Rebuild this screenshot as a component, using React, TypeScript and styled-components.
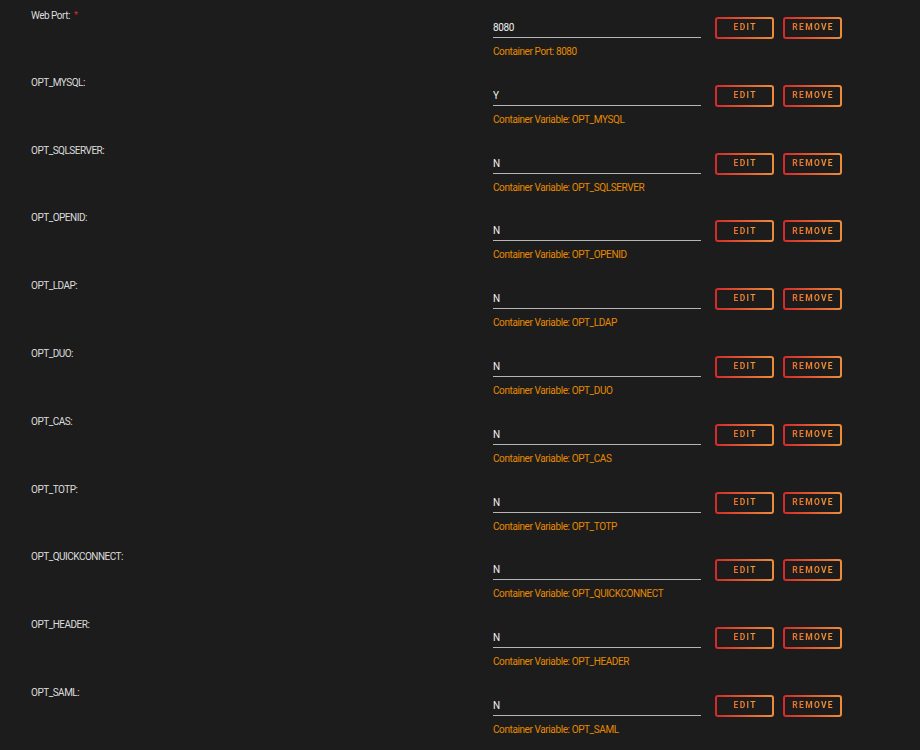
import React from "react";
import styled, { createGlobalStyle } from "styled-components";

type Setting = {
  label: string;
  value: string;
  hint: string;
  required?: boolean;
};

const settings: Setting[] = [
  { label: "Web Port:", value: "8080", hint: "Container Port: 8080", required: true },
  ...["MYSQL", "SQLSERVER", "OPENID", "LDAP", "DUO", "CAS", "TOTP", "QUICKCONNECT", "HEADER", "SAML"].map(
    (name) => ({
      label: `OPT_${name}:`,
      value: name === "MYSQL" ? "Y" : "N",
      hint: `Container Variable: OPT_${name}`,
    })
  ),
];

const GlobalStyle = createGlobalStyle`
  html, body {
    margin: 0;
    padding: 0;
    background: #1c1c1c;
  }
  body {
    font-family: Roboto, "Noto Sans", sans-serif;
    letter-spacing: -0.4px;
    color: #e0e0e0;
  }
`;

const Page = styled.div`
  width: 920px;
  height: 750px;
  overflow: hidden;
  background: #1c1c1c;
`;

const Row = styled.div`
  display: grid;
  grid-template-columns: 462px 1fr;
  height: 67.8px;
  padding-left: 31px;
  box-sizing: border-box;
`;

const Label = styled.div`
  padding-top: 8px;
  font-size: 10px;
  line-height: 14px;
  letter-spacing: -0.5px;
  color: #dcdcdc;
`;

const Star = styled.span`
  color: #e22828;
  margin-left: 4px;
  font-size: 9px;
  vertical-align: 1px;
`;

const Field = styled.div`
  display: flex;
  flex-direction: column;
  padding-top: 17px;
`;

const Line = styled.div`
  display: flex;
  align-items: center;
  gap: 14px;
`;

const Input = styled.input`
  width: 208px;
  height: 20px;
  box-sizing: border-box;
  padding: 0;
  background: transparent;
  border: none;
  border-bottom: 1px solid #b5b5b5;
  outline: none;
  color: #f0f0f0;
  font-family: inherit;
  letter-spacing: inherit;
  font-size: 10px;
`;

const Buttons = styled.div`
  display: flex;
  gap: 9px;
`;

const Button = styled.button`
  display: flex;
  align-items: center;
  justify-content: center;
  width: 59px;
  height: 22px;
  padding: 0 0 1px;
  border: 2px solid transparent;
  border-radius: 3px;
  background: linear-gradient(#1c1c1c, #1c1c1c) padding-box,
    linear-gradient(90deg, #d42a2a, #ec8d3a) border-box;
  cursor: pointer;
`;

const ButtonText = styled.span`
  display: block;
  font-family: Roboto, "Noto Sans", sans-serif;
  font-size: 8.5px;
  line-height: 1;
  font-weight: 700;
  letter-spacing: 1.3px;
  margin-right: -1.3px;
  background: linear-gradient(90deg, #ea6e2c, #f59a35);
  -webkit-background-clip: text;
  background-clip: text;
  color: transparent;
`;

const Hint = styled.div`
  margin-top: 6px;
  font-size: 10px;
  line-height: 14px;
  color: #e68a00;
`;

function SettingRow({ setting }: { setting: Setting }) {
  return (
    <Row>
      <Label>
        {setting.label}
        {setting.required && <Star>*</Star>}
      </Label>
      <Field>
        <Line>
          <Input defaultValue={setting.value} />
          <Buttons>
            <Button type="button">
              <ButtonText>EDIT</ButtonText>
            </Button>
            <Button type="button">
              <ButtonText>REMOVE</ButtonText>
            </Button>
          </Buttons>
        </Line>
        <Hint>{setting.hint}</Hint>
      </Field>
    </Row>
  );
}

export default function App() {
  return (
    <Page>
      <GlobalStyle />
      {settings.map((s) => (
        <SettingRow key={s.label} setting={s} />
      ))}
    </Page>
  );
}
